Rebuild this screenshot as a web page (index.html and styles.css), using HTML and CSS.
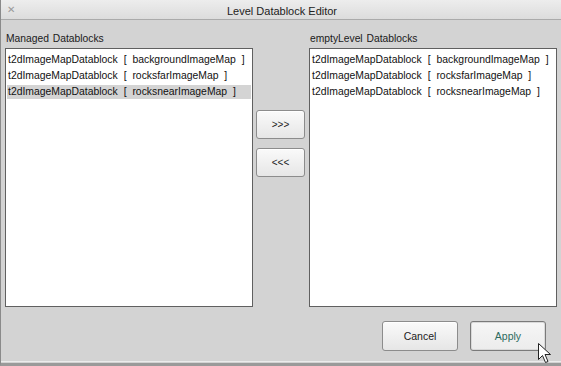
FILE: index.html
```html
<!DOCTYPE html>
<html lang="en">
<head>
  <meta charset="UTF-8">
  <title>Level Datablock Editor</title>
  <link rel="stylesheet" href="styles.css">
</head>
<body>

  <div class="window">
    <div class="titlebar">
      <span class="close">&#x2715;</span>
      <span class="title">Level Datablock Editor</span>
    </div>

    <div class="content">
      <div class="columns">
        <div class="pane">
          <div class="pane-label">Managed Datablocks</div>
          <ul class="list">
            <li>t2dImageMapDatablock [ backgroundImageMap ]</li>
            <li>t2dImageMapDatablock [ rocksfarImageMap ]</li>
            <li class="selected">t2dImageMapDatablock [ rocksnearImageMap ]</li>
          </ul>
        </div>

        <div class="movers">
          <button class="btn">&gt;&gt;&gt;</button>
          <button class="btn">&lt;&lt;&lt;</button>
        </div>

        <div class="pane">
          <div class="pane-label">emptyLevel Datablocks</div>
          <ul class="list">
            <li>t2dImageMapDatablock [ backgroundImageMap ]</li>
            <li>t2dImageMapDatablock [ rocksfarImageMap ]</li>
            <li>t2dImageMapDatablock [ rocksnearImageMap ]</li>
          </ul>
        </div>
      </div>

      <div class="actions">
        <button class="btn btn-wide">Cancel</button>
        <button class="btn btn-wide hover">Apply</button>
      </div>
    </div>

    <svg class="cursor" width="14" height="21" viewBox="0 0 14 21">
      <path d="M0.5 0.5 L0.5 16.5 L4.5 12.5 L7.5 19.5 L10 18.5 L7 11.5 L12.5 11.5 Z" fill="#fff" stroke="#222" stroke-width="1" stroke-linejoin="miter"/>
    </svg>
  </div>

</body>
</html>
```

FILE: styles.css
```css
body {
  margin: 0;
  padding: 0;
  font-family: 'Liberation Sans', Arial, sans-serif;
  background: #d3d3d3;
}

.window {
  position: relative;
  width: 561px;
  height: 366px;
  box-sizing: border-box;
  background: #d3d3d3;
  border-left: 1px solid #8a8a8a;
  border-bottom: 3px solid #9a9a9a;
  overflow: hidden;
}

.titlebar {
  height: 20px;
  box-sizing: border-box;
  padding-top: 2px;
  border-bottom: 1px solid #aaaaaa;
  background: linear-gradient(#ededed, #dcdcdc);
  display: flex;
  align-items: center;
  justify-content: center;
  position: relative;
}

.close {
  position: absolute;
  left: 6px;
  top: 4px;
  font-size: 10px;
  color: #9a9a9a;
}

.title {
  font-size: 11px;
  color: #222;
  margin-left: 2px;
}

.content {
  padding: 10px 0 0 4px;
  box-shadow: inset 0 -1px 0 #ececec;
  height: 342px;
  box-sizing: border-box;
}

.columns {
  display: flex;
}

.pane {
  width: 248px;
}

.pane + .movers {
  margin-left: 3px;
}

.movers + .pane {
  margin-left: 4px;
}

.pane-label {
  font-size: 10.3px;
  line-height: 17px;
  height: 14px;
  margin: 0 0 4px 1px;
  color: #1a1a1a;
  word-spacing: 1px;
}

.list {
  list-style: none;
  margin: 0;
  padding: 4px 1px 0 1px;
  height: 259px;
  box-sizing: border-box;
  background: #fff;
  border: 1px solid #606060;
}

.list li {
  font-size: 10.4px;
  line-height: 14px;
  height: 14px;
  margin-bottom: 2px;
  padding-left: 1px;
  word-spacing: 3px;
  color: #111;
  white-space: nowrap;
}

.list li.selected {
  background: #d4d4d4;
}

.movers {
  width: 49px;
  padding-top: 80px;
  display: flex;
  flex-direction: column;
  gap: 9px;
}

.btn {
  font-family: 'Liberation Sans', Arial, sans-serif;
  font-size: 10px;
  color: #222;
  height: 29px;
  padding: 0;
  border: 1px solid #8c8c8c;
  border-radius: 3px;
  background: linear-gradient(#fafafa, #e6e6e6);
  box-shadow: inset 0 1px 0 #fff;
}

.actions {
  display: flex;
  justify-content: flex-end;
  gap: 12px;
  margin-top: 14px;
  padding-right: 15px;
}

.btn-wide {
  width: 76px;
  height: 30px;
  font-size: 10.5px;
}

.btn.hover {
  background: linear-gradient(#f6f6f6, #ececec);
  border-color: #7a7a7a;
  box-shadow: inset 0 0 0 1px #d9d9d9;
  color: #2d6b5f;
}

.cursor {
  position: absolute;
  left: 537px;
  top: 343px;
}
```
